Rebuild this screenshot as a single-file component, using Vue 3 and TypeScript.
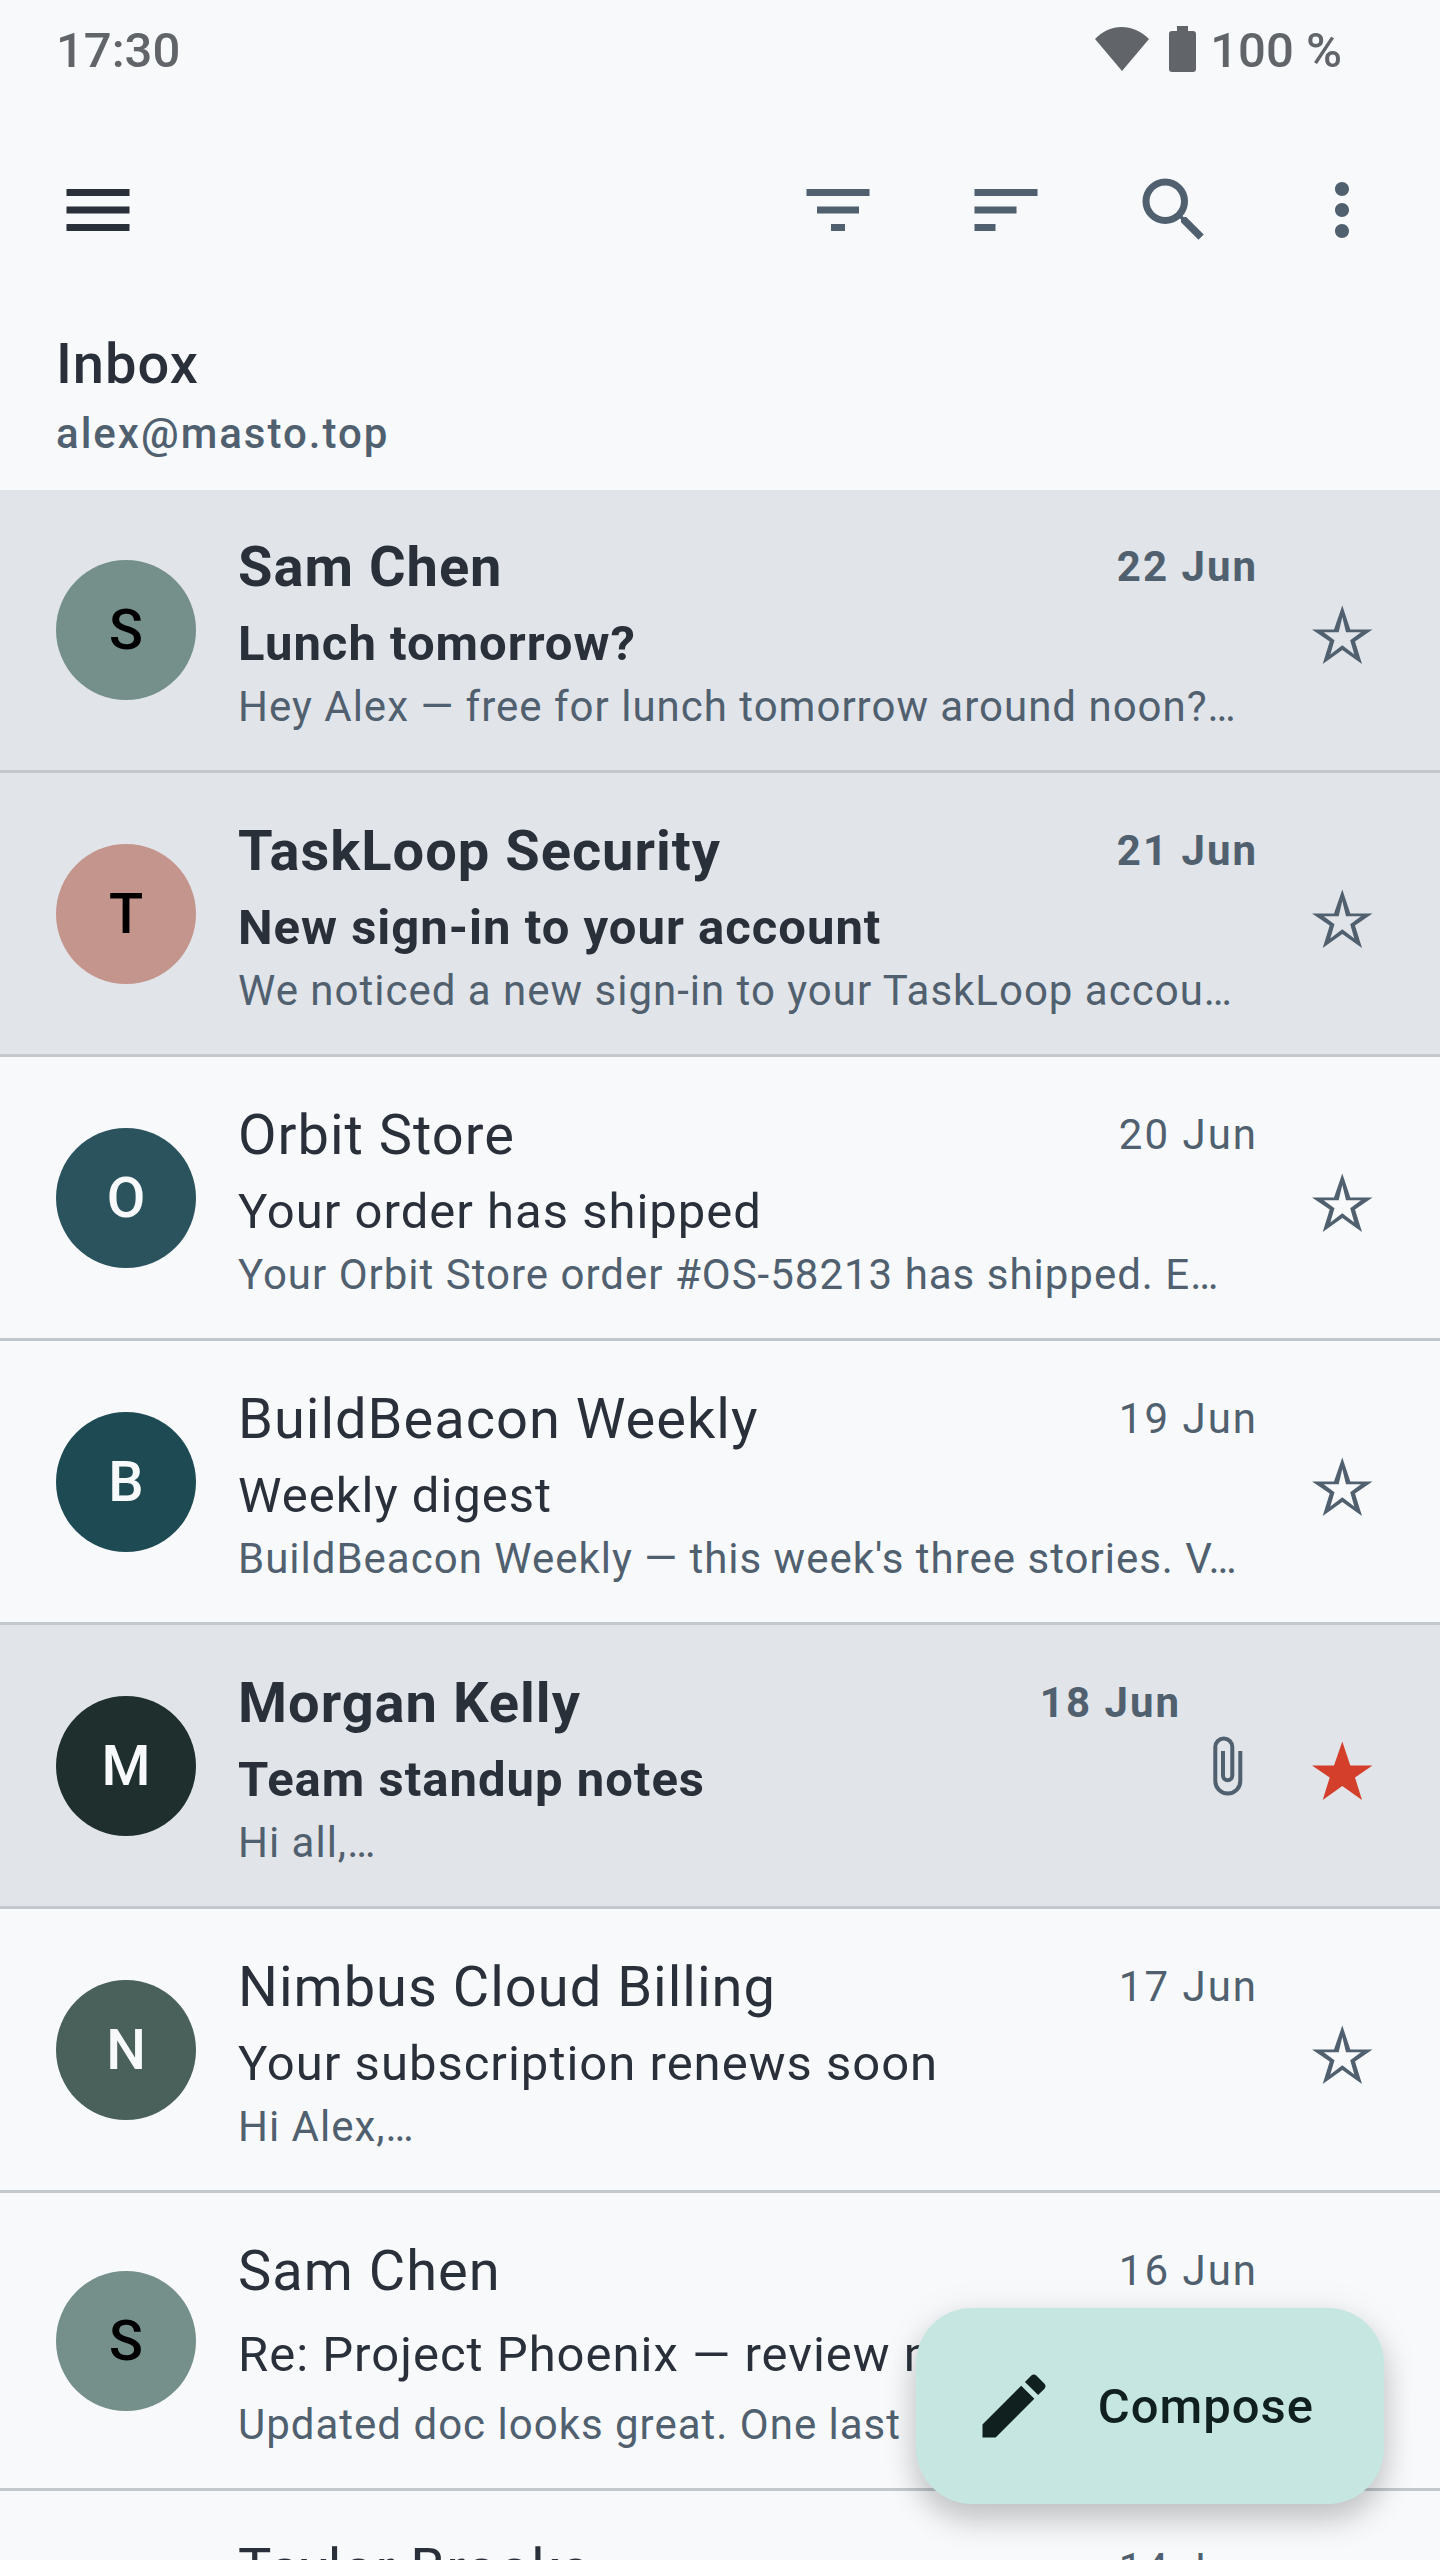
<script setup lang="ts">
interface Message {
  id: number
  sender: string
  initial: string
  tone: string
  subject: string
  preview: string
  date: string
  unread?: boolean
  starred?: boolean
  attachment?: boolean
  tall?: boolean
}

const messages: Message[] = [
  { id: 1, sender: 'Sam Chen', initial: 'S', tone: 'sage', subject: 'Lunch tomorrow?', preview: 'Hey Alex — free for lunch tomorrow around noon?…', date: '22 Jun', unread: true },
  { id: 2, sender: 'TaskLoop Security', initial: 'T', tone: 'rose', subject: 'New sign-in to your account', preview: 'We noticed a new sign-in to your TaskLoop accou…', date: '21 Jun', unread: true },
  { id: 3, sender: 'Orbit Store', initial: 'O', tone: 'ocean', subject: 'Your order has shipped', preview: 'Your Orbit Store order #OS-58213 has shipped. E…', date: '20 Jun' },
  { id: 4, sender: 'BuildBeacon Weekly', initial: 'B', tone: 'teal', subject: 'Weekly digest', preview: "BuildBeacon Weekly — this week's three stories. V…", date: '19 Jun' },
  { id: 5, sender: 'Morgan Kelly', initial: 'M', tone: 'night', subject: 'Team standup notes', preview: 'Hi all,…', date: '18 Jun', unread: true, starred: true, attachment: true },
  { id: 6, sender: 'Nimbus Cloud Billing', initial: 'N', tone: 'moss', subject: 'Your subscription renews soon', preview: 'Hi Alex,…', date: '17 Jun' },
  { id: 7, sender: 'Sam Chen', initial: 'S', tone: 'sage', subject: 'Re: Project Phoenix — review n', preview: 'Updated doc looks great. One last', date: '16 Jun', tall: true },
  { id: 8, sender: 'Taylor Brooks', initial: 'T', tone: 'rose', subject: '', preview: '', date: '14 Jun' },
]
</script>

<template>
  <div class="screen">
    <header class="top">
      <div class="status">
        <time>17:30</time>
        <div class="status-right">
          <svg class="wifi" viewBox="0 0 54 46" aria-hidden="true"><path d="M0 13C15-3 38-3 54 13L27 45z" /></svg>
          <svg class="battery" viewBox="0 0 27 46" aria-hidden="true"><path d="M8 0H19V5H24Q27 5 27 8V43Q27 46 24 46H3Q0 46 0 43V8Q0 5 3 5H8z" /></svg>
          <span>100 %</span>
        </div>
      </div>
      <nav class="toolbar" aria-label="Mailbox actions">
        <button class="tool menu" type="button" aria-label="Menu">
          <svg viewBox="0 0 24 24"><path d="M3 18h18v-2H3v2zm0-5h18v-2H3v2zm0-7v2h18V6H3z" /></svg>
        </button>
        <button class="tool" type="button" aria-label="Filter">
          <svg viewBox="0 0 24 24"><path d="M10 18h4v-2h-4v2zM3 6v2h18V6H3zm3 7h12v-2H6v2z" /></svg>
        </button>
        <button class="tool" type="button" aria-label="Sort">
          <svg viewBox="0 0 24 24"><path d="M3 18h6v-2H3v2zM3 6v2h18V6H3zm0 7h12v-2H3v2z" /></svg>
        </button>
        <button class="tool" type="button" aria-label="Search">
          <svg viewBox="0 0 24 24"><path d="M15.5 14h-.79l-.28-.27A6.471 6.471 0 0 0 16 9.500A6.500 6.500 0 1 0 9.500 16c1.610 0 3.090-.59 4.230-1.570l.27.28v.79l5 4.990L20.490 19l-4.990-5zm-6 0C7.010 14 5 11.990 5 9.500S7.010 5 9.500 5 14 7.010 14 9.500 11.990 14 9.500 14z" /></svg>
        </button>
        <button class="tool" type="button" aria-label="More options">
          <svg viewBox="0 0 24 24"><path d="M12 8c1.100 0 2-.9 2-2s-.9-2-2-2-2 .9-2 2 .9 2 2 2zm0 2c-1.100 0-2 .9-2 2s.9 2 2 2 2-.9 2-2-.9-2-2-2zm0 6c-1.100 0-2 .9-2 2s.9 2 2 2 2-.9 2-2-.9-2-2-2z" /></svg>
        </button>
      </nav>
      <div class="heading">
        <h1>Inbox</h1>
        <p>alex@masto.top</p>
      </div>
    </header>

    <main>
      <ul class="list">
        <li v-for="m in messages" :key="m.id" class="row" :class="{ unread: m.unread, tall: m.tall }">
          <div class="avatar" :class="m.tone">{{ m.initial }}</div>
          <div class="body">
            <div class="line">
              <h2 class="sender">{{ m.sender }}</h2>
              <time class="date">{{ m.date }}</time>
              <span v-if="m.attachment" class="clip-space"></span>
            </div>
            <p class="subject">{{ m.subject }}</p>
            <p class="preview">{{ m.preview }}</p>
            <svg v-if="m.attachment" class="clip" viewBox="0 0 84 84" role="img" aria-label="Has attachment"><path d="M52.300 27V57A12.500 12.500 0 0 1 27.300 57V23A8.500 8.500 0 0 1 44.300 23V51.500A4.600 4.600 0 0 1 35 51.500V27" /></svg>
          </div>
          <button class="star" :class="{ on: m.starred }" type="button" :aria-label="m.starred ? 'Remove star' : 'Add star'">
            <svg viewBox="0 0 84 84"><path v-if="m.starred" d="M42.300 17.500L50.300 41.500H72.500L55 53.500 62 76 42.300 62 22.700 76 29.700 53.500 12 41.500H34z" /><path v-else fill-rule="evenodd" d="M42.300 17.500L50.300 41.500H72.500L55 53.500 62 76 42.300 62 22.700 76 29.700 53.500 12 41.500H34zM42.300 29L38.700 44.300H23.700L34.500 52.200 30.300 66.500 42.300 57.300 54.300 66.500 50.200 52.200 61 44.300H46z" /></svg>
          </button>
        </li>
      </ul>
    </main>

    <button class="compose" type="button">
      <svg viewBox="0 0 24 24" aria-hidden="true"><path d="M3 17.250V21h3.750L17.810 9.940l-3.750-3.750L3 17.250zM20.710 7.040c.39-.39.39-1.020 0-1.410l-2.340-2.340c-.39-.39-1.020-.39-1.410 0l-1.830 1.830 3.750 3.750 1.830-1.830z" /></svg>
      <span>Compose</span>
    </button>
  </div>
</template>

<style>
body {
  margin: 0;
  background: #f7f9fb;
}
</style>

<style scoped>
.screen {
  display: flex;
  flex-direction: column;
  height: 100vh;
  background: #f7f9fb;
  color: #2a303a;
  font-family: Roboto, sans-serif;
}

main {
  flex: 1;
  min-height: 0;
  overflow-y: auto;
  scrollbar-width: none;
}

h1,
h2,
p,
ul {
  margin: 0;
  padding: 0;
}

button {
  border: 0;
  padding: 0;
  background: none;
  color: inherit;
  font: inherit;
}

svg {
  display: block;
  flex: none;
  fill: currentColor;
}

.status {
  display: flex;
  justify-content: space-between;
  align-items: center;
  height: 98px;
  padding: 0 98px 0 56px;
  color: #616569;
  font-size: 49px;
  font-weight: 500;
  line-height: 56px;
}

.status time,
.status span {
  padding-top: 4px;
}

.status-right {
  display: flex;
  align-items: center;
}

.wifi {
  width: 54px;
  height: 46px;
}

.battery {
  width: 27px;
  height: 46px;
  margin: 0 14px 0 20px;
}

.toolbar {
  display: flex;
  align-items: center;
  height: 224px;
  padding: 0 14px;
  color: #50606f;
}

.tool {
  display: grid;
  place-items: center;
  width: 168px;
  height: 168px;
}

.tool svg {
  width: 84px;
  height: 84px;
}

.menu {
  margin-right: auto;
  color: #2a303a;
}

.heading {
  padding: 0 56px 28px;
}

.heading h1 {
  font-size: 56px;
  font-weight: 500;
  line-height: 84px;
  letter-spacing: 1px;
}

.heading p {
  color: #50606f;
  font-size: 42px;
  font-weight: 500;
  line-height: 56px;
  letter-spacing: 2px;
}

.list {
  list-style: none;
}

.row {
  display: flex;
  align-items: center;
  padding: 35px 14px 35px 56px;
}

.row + .row {
  border-top: 3px solid #c2c8ce;
  padding-top: 36px;
}

.unread {
  background: #e1e4e9;
}

.avatar {
  display: grid;
  flex: none;
  place-items: center;
  width: 140px;
  height: 140px;
  border-radius: 50%;
  color: #f7f9fb;
  font-size: 56px;
  font-weight: 500;
}

.sage {
  background: #758f8b;
  color: #000;
}

.rose {
  background: #c4958d;
  color: #000;
}

.ocean {
  background: #2b535e;
}

.teal {
  background: #1e4b53;
}

.night {
  background: #1e2f2e;
}

.moss {
  background: #4a605b;
}

.body {
  position: relative;
  flex: 1;
  min-width: 0;
  margin-left: 42px;
}

.line {
  display: flex;
  align-items: center;
}

.sender {
  flex: 1;
  font-size: 56px;
  font-weight: 400;
  line-height: 84px;
  letter-spacing: 1px;
}

.date {
  color: #50606f;
  font-size: 42px;
  line-height: 56px;
  letter-spacing: 2px;
}

.clip-space {
  width: 77px;
}

.subject {
  min-height: 70px;
  font-size: 49px;
  line-height: 70px;
  letter-spacing: 1px;
  white-space: nowrap;
}

.tall .subject {
  line-height: 84px;
}

.preview {
  min-height: 56px;
  color: #50606f;
  font-size: 42px;
  line-height: 56px;
  letter-spacing: 1px;
  white-space: nowrap;
}

.unread .sender,
.unread .subject,
.unread .date {
  font-weight: 700;
}

.clip {
  position: absolute;
  top: 63px;
  right: -14px;
  width: 84px;
  height: 84px;
  fill: none;
  stroke: #50606f;
  stroke-width: 4;
}

.star {
  display: grid;
  place-items: center;
  width: 168px;
  height: 168px;
  color: #50606f;
}

.star svg {
  width: 84px;
  height: 84px;
}

.star.on {
  color: #d33f2a;
}

.compose {
  position: fixed;
  right: 56px;
  bottom: 56px;
  display: flex;
  align-items: center;
  gap: 42px;
  height: 196px;
  padding: 0 70px 0 56px;
  border-radius: 56px;
  background: #c5e6e1;
  box-shadow: 0 16px 32px rgba(0, 0, 0, 0.2), 0 4px 42px rgba(0, 0, 0, 0.07);
  color: #10201f;
  font-size: 49px;
  font-weight: 500;
  letter-spacing: 1px;
}

.compose svg {
  width: 84px;
  height: 84px;
}
</style>
